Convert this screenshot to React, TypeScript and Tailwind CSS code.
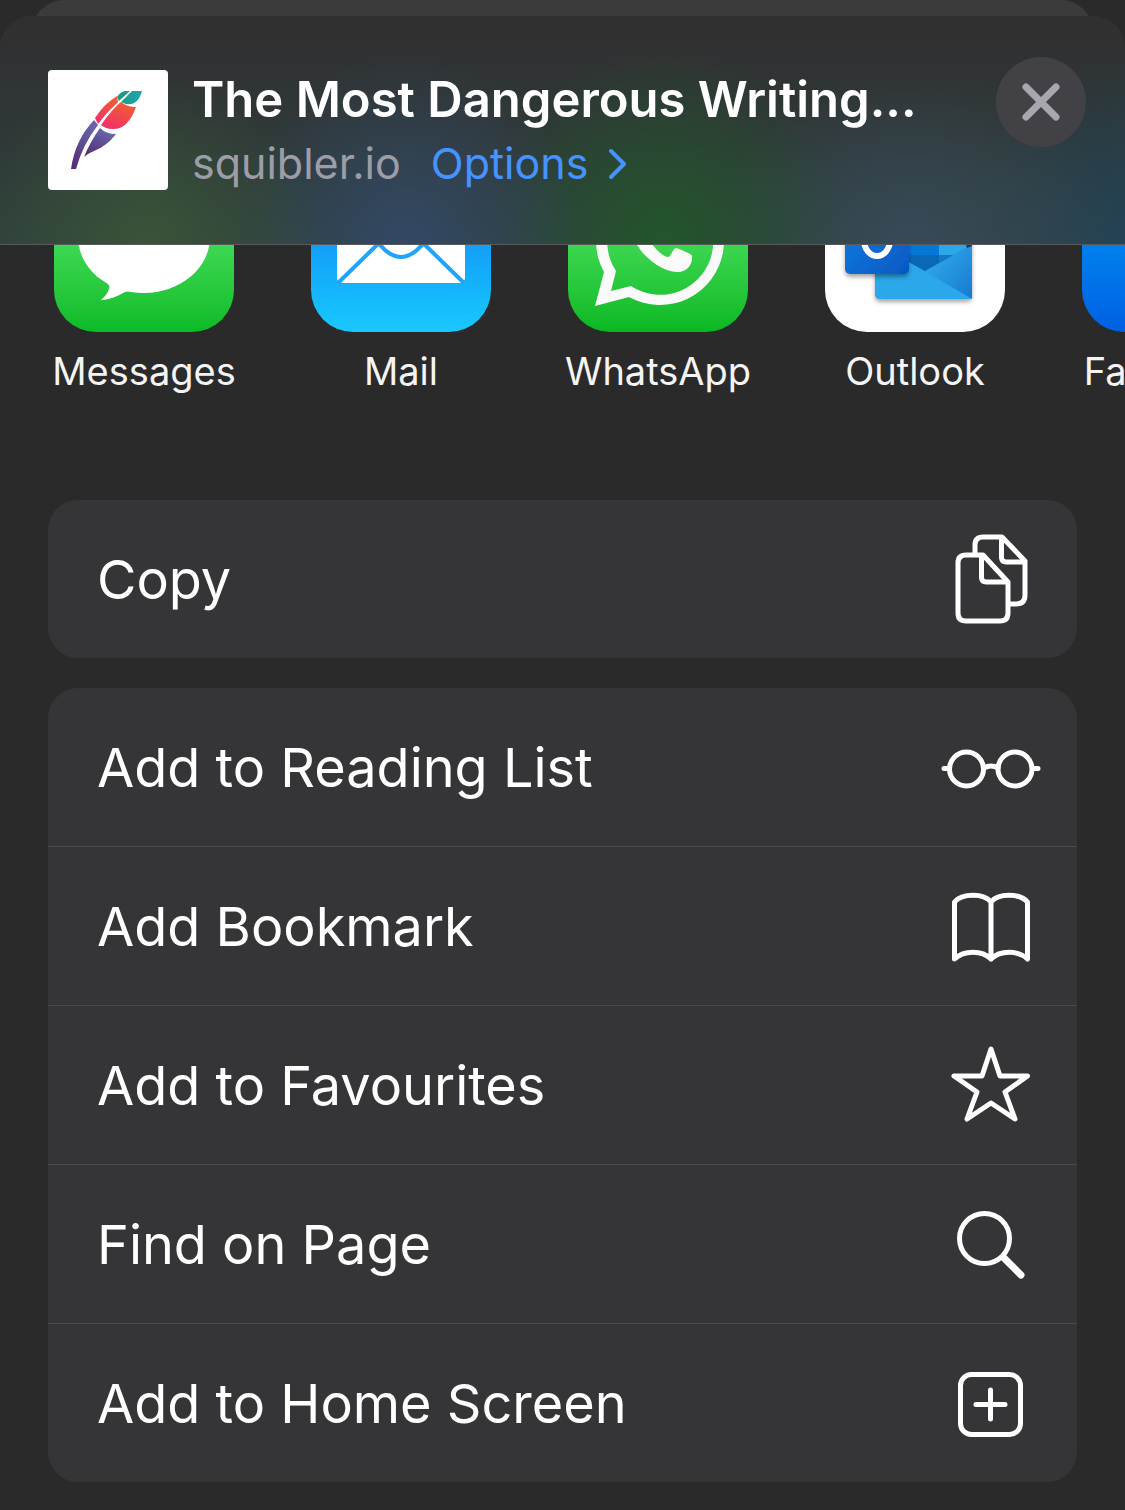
import type { ReactNode } from 'react'

interface ShareApp {
  name: string
  tile: string
  icon: ReactNode
}

interface Action {
  label: string
  icon: ReactNode
}

function FeatherLogo() {
  return (
    <svg viewBox="0 0 120 120" className="h-full w-full" aria-hidden="true">
      <defs>
        <linearGradient id="feather-red" x1="0" y1="1" x2="0.5" y2="0">
          <stop offset="0.1" stopColor="#f0316b" />
          <stop offset="1" stopColor="#f05a34" />
        </linearGradient>
        <linearGradient id="feather-purple" x1="0" y1="1" x2="0.5" y2="0">
          <stop offset="0" stopColor="#512a70" />
          <stop offset="1" stopColor="#6864ab" />
        </linearGradient>
        <linearGradient id="feather-teal" x1="0" y1="0" x2="1" y2="0">
          <stop offset="0" stopColor="#1d9c86" />
          <stop offset="1" stopColor="#22a3b8" />
        </linearGradient>
      </defs>
      <path d="M69 27Q72 22 77 21H82L71 31Z" fill="#1d9c86" />
      <path d="M73 32L84 21H94Q90 36 78 34Z" fill="url(#feather-teal)" />
      <path d="M47 48Q56 34 69 26L70 32Q59 42 50 54Z" fill="url(#feather-red)" />
      <path d="M53 55Q64 39 73 32Q79 37 88 37Q80 60 64 59Q58 59 53 55Z" fill="url(#feather-red)" />
      <path d="M46 50L50 55Q35 74 28 99H23Q27 70 46 50Z" fill="url(#feather-purple)" />
      <path d="M52 58Q58 64 68 64Q59 76 46 81Q39 84 36 87Q42 72 52 58Z" fill="url(#feather-purple)" />
    </svg>
  )
}

function MessagesIcon() {
  return (
    <svg viewBox="0 0 180 180" className="h-full w-full" aria-hidden="true">
      <ellipse cx="90" cy="85" rx="66" ry="56" fill="#fff" />
      <path d="M42 124Q58 132 55 137Q53 143 47 148Q57 148 71 140Q78 138 88 141V110H42Z" fill="#fff" />
    </svg>
  )
}

function MailIcon() {
  return (
    <svg viewBox="0 0 180 180" className="h-full w-full" aria-hidden="true">
      <rect x="26" y="46" width="128" height="85" rx="5" fill="#fff" />
      <g fill="none" stroke="#1ea4fa" strokeWidth="4">
        <path d="M27 131L69 90" />
        <path d="M153 131L111 90" />
        <path d="M28 52L74 98Q90 112 106 98L152 52" />
      </g>
    </svg>
  )
}

function WhatsAppIcon() {
  return (
    <svg viewBox="0 0 180 180" className="h-full w-full" aria-hidden="true">
      <path
        fillRule="evenodd"
        fill="#fafafa"
        d="M27 154L36 120A64 64 0 1 1 61 145ZM43 139L63 134A53 53 0 1 0 48 119Z"
      />
      <path
        fill="#fafafa"
        d="M62 70C62 96 90 120 110 120C119 120 125 112 124 104C124 102 112 97 108 96C105 96 103 105 100 105C95 105 84 94 82 88L88 80L82 64Z"
      />
    </svg>
  )
}

function OutlookIcon() {
  return (
    <svg viewBox="0 0 180 180" className="h-full w-full" aria-hidden="true">
      <defs>
        <linearGradient id="outlook-tile" x1="0" y1="0" x2="1" y2="1">
          <stop offset="0" stopColor="#1480e0" />
          <stop offset="1" stopColor="#0558c4" />
        </linearGradient>
        <linearGradient id="outlook-flap" x1="0" y1="0" x2="1" y2="1">
          <stop offset="0" stopColor="#35b1f0" />
          <stop offset="1" stopColor="#1679cf" />
        </linearGradient>
        <filter id="outlook-shadow" x="-20%" y="-20%" width="140%" height="140%">
          <feDropShadow dx="0" dy="3" stdDeviation="2" floodOpacity="0.35" />
        </filter>
      </defs>
      <rect x="50" y="60" width="97" height="87" rx="5" fill="#2196e0" filter="url(#outlook-shadow)" />
      <path d="M100 119L147 92V147Z" fill="url(#outlook-flap)" />
      <path d="M50 90L147 147H55Q50 147 50 142Z" fill="#2ba8ea" />
      <path d="M80 60H114V103H80Z" fill="#0478d7" />
      <path d="M114 60H147V92L128 103H114Z" fill="#2ba8ea" />
      <path d="M80 103H128L100 119L80 108Z" fill="#0a68b8" />
      <path d="M114 103H128L114 111Z" fill="#1677c6" />
      <path d="M140 90H147V94L142 96Z" fill="#123b6d" />
      <rect x="20" y="58" width="64" height="64" rx="5" fill="url(#outlook-tile)" filter="url(#outlook-shadow)" />
      <ellipse cx="52" cy="88" rx="13" ry="16" fill="none" stroke="#fff" strokeWidth="6" />
    </svg>
  )
}

const strokeProps = {
  viewBox: '0 0 100 100',
  className: 'size-[100px] shrink-0',
  fill: 'none',
  stroke: 'currentColor',
  strokeWidth: 5,
  strokeLinecap: 'round',
  strokeLinejoin: 'round',
  'aria-hidden': true,
} as const

const copyIcon = (
  <svg {...strokeProps}>
    <path d="M42 26H25Q17 26 17 34V84Q17 92 25 92H59Q67 92 67 84V53L42 26Z" />
    <path d="M40.5 27V49Q41 53 45 53H66" />
    <path d="M34 24V16Q34 8 42 8H61L84 32V66Q84 75 75 75H69" strokeLinecap="butt" />
    <path d="M60.5 9V29Q61 33 65 33H83" />
  </svg>
)

const glassesIcon = (
  <svg {...strokeProps}>
    <circle cx="25.5" cy="52" r="17" />
    <circle cx="74" cy="52" r="17" />
    <path d="M43 51Q50 47 57 51M3 51.5H8M92 51.5H97" />
  </svg>
)

const bookIcon = (
  <svg {...strokeProps}>
    <path d="M50 26C43 17 21 17 13.5 26V83C23 74 41 74 50 83C59 74 77 74 86.5 83V26C79 17 57 17 50 26V83" />
  </svg>
)

const starIcon = (
  <svg {...strokeProps}>
    <path d="M50 14L59 41L86.5 41L64 57L74 84L50 68L26 84L36 57L13 41L41 41Z" />
  </svg>
)

const searchIcon = (
  <svg {...strokeProps}>
    <circle cx="43.5" cy="44.5" r="25" />
    <path d="M63 64L80 81" strokeWidth="7" />
  </svg>
)

const plusIcon = (
  <svg {...strokeProps}>
    <rect x="19.5" y="21.5" width="60" height="60" rx="11" />
    <path d="M49.5 37V66M35 51.5H64" />
  </svg>
)

const apps: ShareApp[] = [
  { name: 'Messages', tile: 'bg-linear-to-b from-[#5df777] to-[#0abb27]', icon: <MessagesIcon /> },
  { name: 'Mail', tile: 'bg-linear-to-b from-[#1e70f2] to-[#1ac8fd]', icon: <MailIcon /> },
  { name: 'WhatsApp', tile: 'bg-linear-to-b from-[#5df777] to-[#07b822]', icon: <WhatsAppIcon /> },
  { name: 'Outlook', tile: 'bg-white', icon: <OutlookIcon /> },
  { name: 'Facebook', tile: 'bg-linear-to-b from-[#14a0fa] to-[#0060e2]', icon: null },
]

const groups: Action[][] = [
  [{ label: 'Copy', icon: copyIcon }],
  [
    { label: 'Add to Reading List', icon: glassesIcon },
    { label: 'Add Bookmark', icon: bookIcon },
    { label: 'Add to Favourites', icon: starIcon },
    { label: 'Find on Page', icon: searchIcon },
    { label: 'Add to Home Screen', icon: plusIcon },
  ],
]

function SheetHeader() {
  return (
    <header className="relative z-10 flex h-[229px] items-start rounded-t-[32px] border-b border-[#59595b] bg-[#303031] bg-[radial-gradient(180px_170px_at_13%_100%,#3a5338_0%,transparent_100%),radial-gradient(180px_190px_at_36%_100%,#334865_0%,transparent_100%),radial-gradient(180px_190px_at_59%_98%,#23552b_0%,transparent_100%),radial-gradient(210px_170px_at_81%_100%,#384a59_0%,transparent_100%),radial-gradient(200px_190px_at_103%_100%,#21435a_0%,transparent_100%),linear-gradient(#303031_5%,#2e403d_100%)] pt-[41px] pr-[39px] pl-12">
      <div className="mt-[13px] size-[120px] shrink-0 overflow-hidden rounded-[4px] bg-white">
        <FeatherLogo />
      </div>
      <div className="mt-[13px] ml-6 min-w-0 flex-1">
        <h1 className="text-[49px] leading-[60px] font-semibold whitespace-nowrap text-white">
          The Most Dangerous Writing...
        </h1>
        <div className="flex items-center gap-[30px] text-[43px] leading-[67px]">
          <span className="text-[#9d9da7]">squibler.io</span>
          <button type="button" className="flex items-center gap-5 text-[#4692ff]">
            Options
            <svg viewBox="0 0 20 32" className="h-8 w-5" fill="none" stroke="currentColor" strokeWidth="4" strokeLinecap="round" strokeLinejoin="round" aria-hidden="true">
              <path d="M3 3L16 16L3 29" />
            </svg>
          </button>
        </div>
      </div>
      <button
        type="button"
        aria-label="Close"
        className="flex size-[90px] shrink-0 items-center justify-center rounded-full bg-[#424246] text-[#a7a7af]"
      >
        <svg viewBox="0 0 40 40" className="size-10" stroke="currentColor" strokeWidth="7" strokeLinecap="round" aria-hidden="true">
          <path d="M5 5L35 35M35 5L5 35" />
        </svg>
      </button>
    </header>
  )
}

function AppRow() {
  // the row is scrolled, so the upper half of the tiles sits under the header
  return (
    <nav className="-mt-[93px] flex gap-[77px] overflow-hidden pb-[105px] pl-[54px]">
      {apps.map((app) => (
        <button key={app.name} type="button" className="flex w-[180px] shrink-0 flex-col items-center">
          <span className={`block size-[180px] overflow-hidden rounded-[42px] ${app.tile}`}>{app.icon}</span>
          <span className="mt-[15px] text-[38px] leading-[48px] whitespace-nowrap text-[#f4f4f5]">{app.name}</span>
        </button>
      ))}
    </nav>
  )
}

function ActionGroup({ actions }: { actions: Action[] }) {
  return (
    <ul className="divide-y divide-[#4a4a4e] overflow-hidden rounded-[30px] bg-[#353537]">
      {actions.map((action) => (
        <li key={action.label}>
          <button
            type="button"
            className="flex h-[158px] w-full items-center justify-between pr-9 pl-[49px] text-left text-[54px] text-white"
          >
            {action.label}
            {action.icon}
          </button>
        </li>
      ))}
    </ul>
  )
}

export default function App() {
  return (
    <div className="min-h-screen overflow-hidden bg-[#2a2a2b] font-['Inter',sans-serif]">
      {/* Page card peeking out behind the sheet */}
      <div className="mx-8 h-4 overflow-hidden">
        <div className="h-20 rounded-t-[32px] bg-[#3b3b3b]" />
      </div>

      <SheetHeader />
      <AppRow />

      <main className="flex flex-col gap-[30px] px-12 pb-7">
        {groups.map((actions) => (
          <ActionGroup key={actions[0].label} actions={actions} />
        ))}
      </main>
    </div>
  )
}
